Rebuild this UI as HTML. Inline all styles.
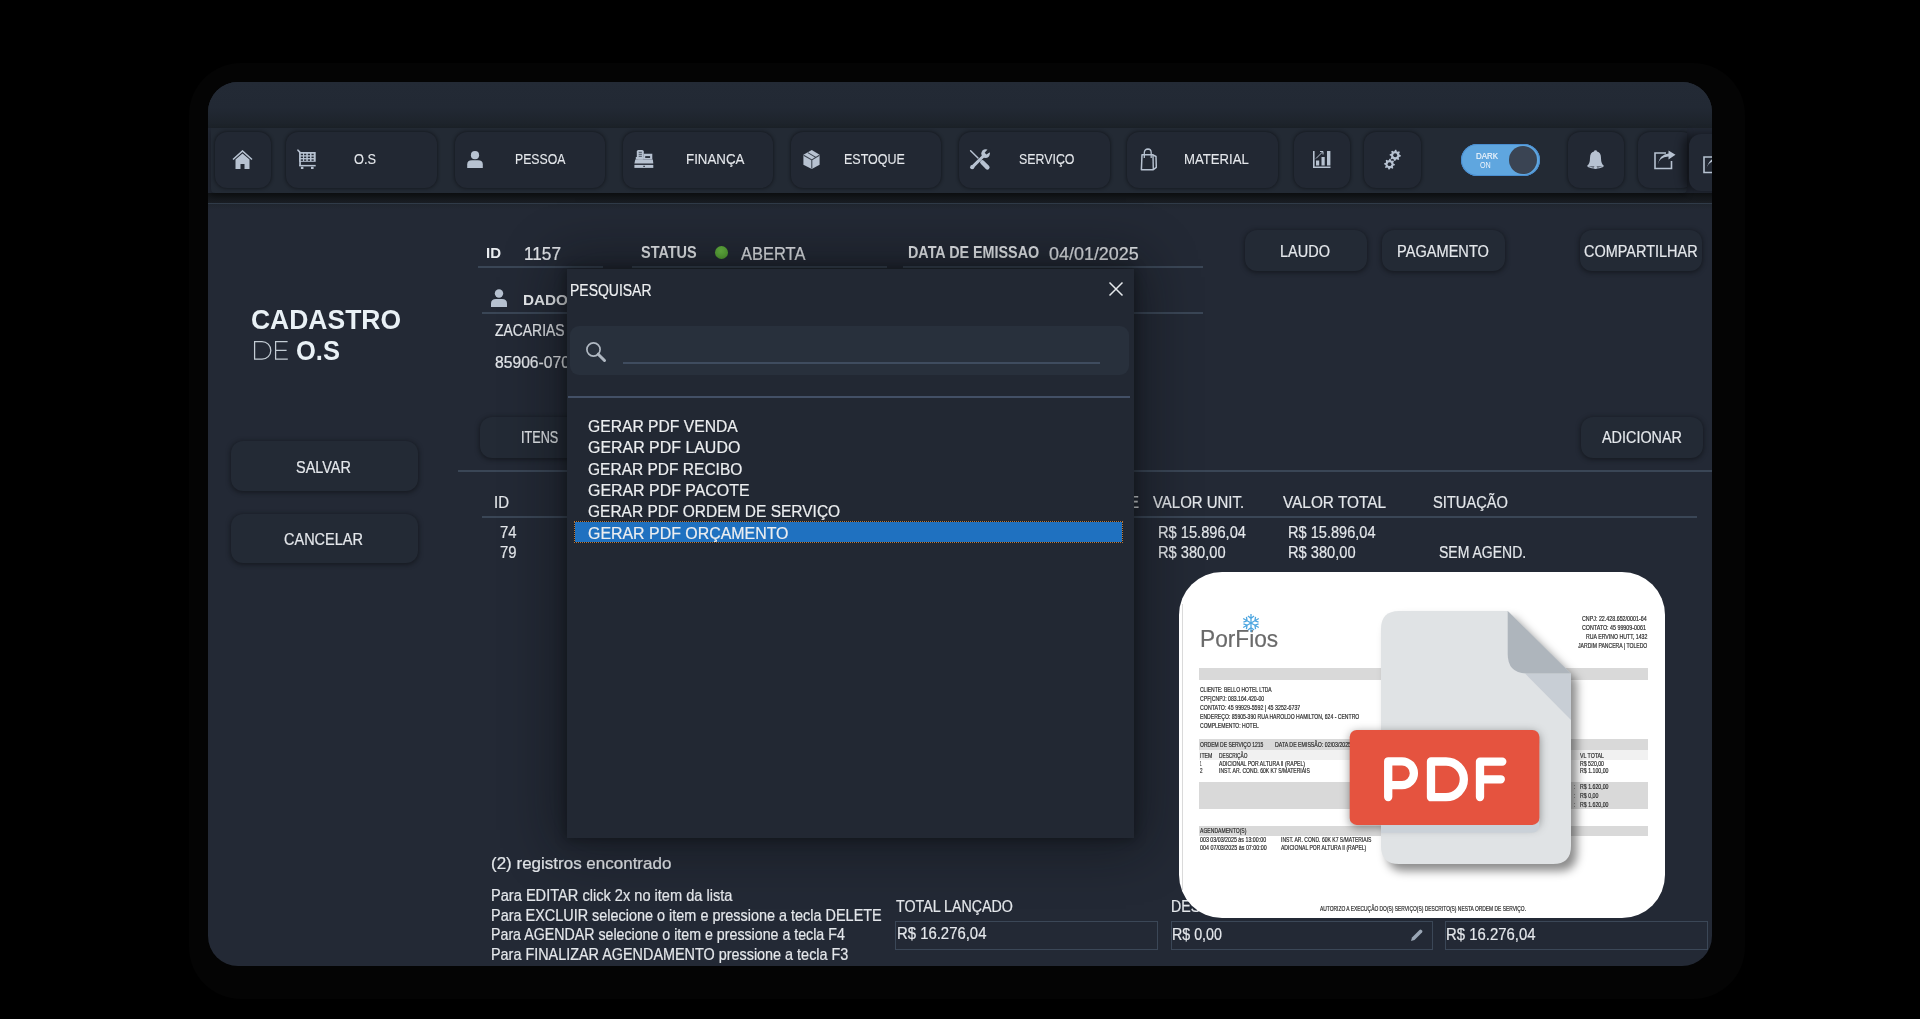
<!DOCTYPE html><html><head><meta charset="utf-8"><style>html,body{margin:0;padding:0;width:1920px;height:1019px;overflow:hidden;background:#000;font-family:"Liberation Sans",sans-serif;}.a{position:absolute;}.t{position:absolute;white-space:nowrap;line-height:1;transform-origin:0 0;}svg.a{display:block;}</style></head><body><div class="a" style="left:189px;top:63px;width:1556px;height:936px;background:#040404;border-radius:52px;"></div>
<div class="a" id="win" style="left:208px;top:82px;width:1504px;height:884px;border-radius:30px;overflow:hidden;background:#232935;">
<div class="a" style="left:-208px;top:-82px;width:1920px;height:1019px;">
<div class="a" style="left:208px;top:82px;width:1504px;height:46px;background:linear-gradient(#232a35 0%,#222934 55%,#1c2229 100%);"></div>
<div class="a" style="left:208px;top:193px;width:1504px;height:10px;background:linear-gradient(#111417,#1a1e24);"></div>
<div class="a" style="left:208px;top:203px;width:1504px;height:1px;background:#303b48;"></div>
<div class="a" style="left:208px;top:204px;width:1504px;height:6px;background:linear-gradient(#20262f,#232935);"></div>
<div class="a" style="left:211px;top:128px;width:1476px;height:65px;background:#232a34;border-radius:0 0 4px 4px;box-shadow:0 3px 6px rgba(0,0,0,.35);"></div>
<div class="a" style="left:215px;top:132px;width:56px;height:56px;background:#222833;border-radius:12px;box-shadow:0 0 3px 1px rgba(12,14,18,.5);"></div>
<div class="a" style="left:286px;top:132px;width:151px;height:56px;background:#222833;border-radius:12px;box-shadow:0 0 3px 1px rgba(12,14,18,.5);"></div>
<div class="a" style="left:455px;top:132px;width:150px;height:56px;background:#222833;border-radius:12px;box-shadow:0 0 3px 1px rgba(12,14,18,.5);"></div>
<div class="a" style="left:623px;top:132px;width:150px;height:56px;background:#222833;border-radius:12px;box-shadow:0 0 3px 1px rgba(12,14,18,.5);"></div>
<div class="a" style="left:791px;top:132px;width:150px;height:56px;background:#222833;border-radius:12px;box-shadow:0 0 3px 1px rgba(12,14,18,.5);"></div>
<div class="a" style="left:959px;top:132px;width:151px;height:56px;background:#222833;border-radius:12px;box-shadow:0 0 3px 1px rgba(12,14,18,.5);"></div>
<div class="a" style="left:1127px;top:132px;width:151px;height:56px;background:#222833;border-radius:12px;box-shadow:0 0 3px 1px rgba(12,14,18,.5);"></div>
<div class="a" style="left:1294px;top:132px;width:56px;height:56px;background:#222833;border-radius:12px;box-shadow:0 0 3px 1px rgba(12,14,18,.5);"></div>
<div class="a" style="left:1364px;top:132px;width:57px;height:56px;background:#222833;border-radius:12px;box-shadow:0 0 3px 1px rgba(12,14,18,.5);"></div>
<div class="a" style="left:1568px;top:132px;width:56px;height:56px;background:#222833;border-radius:12px;box-shadow:0 0 3px 1px rgba(12,14,18,.5);"></div>
<div class="a" style="left:1630px;top:128px;width:57px;height:65px;overflow:hidden;"><div class="a" style="left:8px;top:4px;width:56px;height:56px;background:#222833;border-radius:12px;box-shadow:0 0 3px 1px rgba(12,14,18,.5);"></div></div>
<div class="a" style="left:1689px;top:134px;width:71px;height:57px;background:#222833;border-radius:12px;box-shadow:-6px 0 8px rgba(0,0,0,.45);"></div>
<svg class="a" style="left:232px;top:150px" width="21" height="20" viewBox="0 0 21 20"><path d="M1 9.5 L10.5 1 L20 9.5" fill="none" stroke="#b7c2d1" stroke-width="1.6"/><path d="M3.5 9.5 L10.5 3.5 L17.5 9.5 V19 H12.5 V14 H8.5 V19 H3.5 Z" fill="#b7c2d1"/></svg>
<svg class="a" style="left:297px;top:149px" width="20" height="21" viewBox="0 0 20 21"><path d="M1 1.2 L3 3.4" stroke="#b7c2d1" stroke-width="1.6" stroke-linecap="round"/><rect x="2.2" y="3" width="16.5" height="9.8" fill="#b7c2d1"/><rect x="2.2" y="3" width="1.7" height="13.8" fill="#b7c2d1"/><rect x="3.8000000000000003" y="4.75" width="2.2" height="1.5" fill="#262d38"/><rect x="3.8000000000000003" y="7.550000000000001" width="2.2" height="1.5" fill="#262d38"/><rect x="3.8000000000000003" y="10.35" width="2.2" height="1.5" fill="#262d38"/><rect x="7.1" y="4.75" width="2.2" height="1.5" fill="#262d38"/><rect x="7.1" y="7.550000000000001" width="2.2" height="1.5" fill="#262d38"/><rect x="7.1" y="10.35" width="2.2" height="1.5" fill="#262d38"/><rect x="10.8" y="4.75" width="2.2" height="1.5" fill="#262d38"/><rect x="10.8" y="7.550000000000001" width="2.2" height="1.5" fill="#262d38"/><rect x="10.8" y="10.35" width="2.2" height="1.5" fill="#262d38"/><rect x="14.5" y="4.75" width="2.2" height="1.5" fill="#262d38"/><rect x="14.5" y="7.550000000000001" width="2.2" height="1.5" fill="#262d38"/><rect x="14.5" y="10.35" width="2.2" height="1.5" fill="#262d38"/><rect x="2.2" y="15.9" width="16.5" height="1.5" fill="#b7c2d1"/><rect x="3.9" y="17.8" width="2.5" height="2.2" fill="#b7c2d1"/><rect x="14" y="17.8" width="2.6" height="2.2" fill="#b7c2d1"/></svg>
<svg class="a" style="left:466px;top:150px" width="18" height="19" viewBox="0 0 18 19"><circle cx="9" cy="5.2" r="4.1" fill="#b7c2d1"/><path d="M1.2 18 V14.5 Q1.2 10.3 6 10.3 H12 Q16.8 10.3 16.8 14.5 V18 Z" fill="#b7c2d1"/></svg>
<svg class="a" style="left:633px;top:149px" width="22" height="20" viewBox="0 0 22 20"><rect x="3.8" y="1" width="7" height="9.4" rx="1.6" fill="#b7c2d1"/><path d="M5.7 3.3 H8.9 M5.7 5.3 H8.9 M5.7 7.3 H8.9" stroke="#3a4350" stroke-width="0.9"/><path d="M10.8 4.7 H19.3 V10.6 H2.8 V10.4 H10.8 Z" fill="#b7c2d1"/><rect x="2.8" y="8" width="8" height="2.6" fill="#b7c2d1"/><rect x="12.2" y="7.1" width="4.9" height="1.9" fill="#2a313c"/><path d="M2.3 10.6 H19.8 L20.3 14.6 H1.4 Z" fill="#b7c2d1"/><rect x="1.4" y="15.9" width="18.9" height="3" fill="#b7c2d1"/><rect x="10.3" y="16.8" width="1.6" height="1.1" fill="#2a313c"/></svg>
<svg class="a" style="left:802px;top:149px" width="19" height="21" viewBox="0 0 19 21"><path d="M9.8 1 L17.6 5.8 V15.7 L9.8 19.9 L1.4 15.7 V5.8 Z" fill="#b7c2d1"/><path d="M1.6 6.3 L9.8 11 L17.4 6.3 M9.8 11 V19.5 M5.8 3.6 L13.8 8.4" fill="none" stroke="#39414d" stroke-width="1.05"/></svg>
<svg class="a" style="left:968px;top:148px" width="23" height="23" viewBox="0 0 23 23"><path d="M2.6 2.8 L10 10" stroke="#b7c2d1" stroke-width="1.5" stroke-linecap="round"/><path d="M14.3 14.3 L19.4 19.4" stroke="#b7c2d1" stroke-width="4.4" stroke-linecap="round"/><path d="M4.5 18.8 L15.5 8" stroke="#b7c2d1" stroke-width="3.1" stroke-linecap="round"/><circle cx="17.6" cy="5.6" r="4.3" fill="#b7c2d1"/><circle cx="4.2" cy="19.2" r="2.1" fill="#b7c2d1"/><path d="M18.4 6.4 L16.7 4.7 L20.6 0.3 L23.5 3.2 Z" fill="#222833"/></svg>
<svg class="a" style="left:1139px;top:148px" width="20" height="23" viewBox="0 0 20 23"><path d="M3 6.8 H14 L17 8.5 L17.3 19.4 L14.3 21.7 H2.4 Z" fill="none" stroke="#b7c2d1" stroke-width="1.5" stroke-linejoin="round"/><path d="M14 6.8 L14.3 21.7" stroke="#b7c2d1" stroke-width="1.4"/><path d="M5.3 10 V4.5 Q5.5 1.2 9 1 Q12 1 12.2 4.5 V10" fill="none" stroke="#b7c2d1" stroke-width="1.3"/></svg>
<svg class="a" style="left:1312px;top:150px" width="20" height="20" viewBox="0 0 20 20"><path d="M1.8 1 V17.3 H18.5" fill="none" stroke="#b7c2d1" stroke-width="1.6"/><rect x="4" y="10.5" width="3.2" height="5" fill="#b7c2d1"/><rect x="9.5" y="7" width="3.2" height="8.5" fill="#b7c2d1"/><rect x="15" y="1" width="3.4" height="14.5" fill="#b7c2d1"/><path d="M4 8.5 L10.5 2" stroke="#b7c2d1" stroke-width="1"/><path d="M8 1.5 H11 V4.5" fill="none" stroke="#b7c2d1" stroke-width="1"/></svg>
<svg class="a" style="left:1383px;top:148px" width="20" height="23" viewBox="0 0 20 23"><polygon points="17.80,7.30 17.69,8.39 16.08,8.91 15.69,9.63 16.16,11.26 15.31,11.96 13.81,11.18 13.02,11.42 12.20,12.90 11.11,12.79 10.59,11.18 9.87,10.79 8.24,11.26 7.54,10.41 8.32,8.91 8.08,8.12 6.60,7.30 6.71,6.21 8.32,5.69 8.71,4.97 8.24,3.34 9.09,2.64 10.59,3.42 11.38,3.18 12.20,1.70 13.29,1.81 13.81,3.42 14.53,3.81 16.16,3.34 16.86,4.19 16.08,5.69 16.32,6.48" fill="#b7c2d1"/><circle cx="12.2" cy="7.3" r="1.96" fill="#222833"/><polygon points="11.90,16.20 11.80,17.25 10.24,17.75 9.87,18.45 10.32,20.02 9.50,20.69 8.05,19.94 7.29,20.17 6.50,21.60 5.45,21.50 4.95,19.94 4.25,19.57 2.68,20.02 2.01,19.20 2.76,17.75 2.53,16.99 1.10,16.20 1.20,15.15 2.76,14.65 3.13,13.95 2.68,12.38 3.50,11.71 4.95,12.46 5.71,12.23 6.50,10.80 7.55,10.90 8.05,12.46 8.75,12.83 10.32,12.38 10.99,13.20 10.24,14.65 10.47,15.41" fill="#b7c2d1"/><circle cx="6.5" cy="16.2" r="1.89" fill="#222833"/></svg>
<div class="a" style="left:1461px;top:144px;width:79px;height:32px;background:#5fa6df;border-radius:16px;box-shadow:inset 0 0 0 1px #4a8ed0;"></div>
<div class="a" style="left:1509px;top:146px;width:28px;height:28px;border-radius:50%;background:#3a4453;"></div>
<div class="t" style="left:1475.50px;top:152.00px;font-size:9.01px;color:#eef4fb;transform:scaleX(0.8782);-webkit-text-stroke:0.2px #eef4fb;">DARK</div>
<div class="t" style="left:1479.70px;top:161.00px;font-size:8.58px;color:#eef4fb;transform:scaleX(0.8396);">ON</div>
<svg class="a" style="left:1586px;top:149px" width="19" height="21" viewBox="0 0 19 21"><path d="M9.5 1.2 Q11 1.2 11 2.6 Q15 3.6 15 9 Q15 14.5 17.8 16.8 L17.8 17.5 H1.2 L1.2 16.8 Q4 14.5 4 9 Q4 3.6 8 2.6 Q8 1.2 9.5 1.2 Z" fill="#b7c2d1"/><path d="M2 17.5 Q9.5 21 17 17.5" fill="none" stroke="#b7c2d1" stroke-width="1.2"/><circle cx="9.5" cy="18.3" r="1.6" fill="#b7c2d1"/></svg>
<svg class="a" style="left:1654px;top:150px" width="23" height="20" viewBox="0 0 23 20"><path d="M12 3 H1 V18.5 H17.5 V11" fill="none" stroke="#b7c2d1" stroke-width="1.6"/><path d="M3.5 15 Q5 7 14.5 6.5 V9.5 L21.5 4.8 L14.5 0.5 V3.5 Q6 4 3.5 15 Z" fill="#b7c2d1"/></svg>
<div class="a" style="left:1689px;top:134px;width:23px;height:57px;overflow:hidden;"><svg class="a" style="left:14px;top:20px" width="23" height="20" viewBox="0 0 23 20"><path d="M12 3 H1 V18.5 H17.5 V11" fill="none" stroke="#b7c2d1" stroke-width="1.6"/><path d="M3.5 15 Q5 7 14.5 6.5 V9.5 L21.5 4.8 L14.5 0.5 V3.5 Q6 4 3.5 15 Z" fill="#b7c2d1"/></svg></div>
<div class="t" style="left:354.00px;top:151.00px;font-size:15.12px;color:#e4e7eb;transform:scaleX(0.8437);-webkit-text-stroke:0.1px #e4e7eb;">O.S</div>
<div class="t" style="left:515.00px;top:152.00px;font-size:14.39px;color:#e4e7eb;transform:scaleX(0.8529);-webkit-text-stroke:0.1px #e4e7eb;">PESSOA</div>
<div class="t" style="left:686.00px;top:152.00px;font-size:14.39px;color:#e4e7eb;transform:scaleX(0.9261);-webkit-text-stroke:0.1px #e4e7eb;">FINANÇA</div>
<div class="t" style="left:844.00px;top:152.00px;font-size:14.39px;color:#e4e7eb;transform:scaleX(0.8705);-webkit-text-stroke:0.1px #e4e7eb;">ESTOQUE</div>
<div class="t" style="left:1018.50px;top:152.00px;font-size:14.39px;color:#e4e7eb;transform:scaleX(0.8600);-webkit-text-stroke:0.1px #e4e7eb;">SERVIÇO</div>
<div class="t" style="left:1184.00px;top:152.00px;font-size:14.39px;color:#e4e7eb;transform:scaleX(0.9144);-webkit-text-stroke:0.1px #e4e7eb;">MATERIAL</div>
<div class="t" style="left:251.00px;top:306.00px;font-size:27.91px;font-weight:bold;color:#e9f1f6;transform:scaleX(0.9488);">CADASTRO</div>
<svg class="a" style="left:250px;top:338px" width="42" height="26" viewBox="0 0 42 26"><path d="M4.6 3.6 V21.2 H12 A8.8 8.8 0 0 0 12 3.6 Z M37.6 3.6 H25.6 V21.2 H37.8 M25.6 12.4 H36.6" fill="none" stroke="#c3ccd4" stroke-width="1.25"/></svg>
<div class="t" style="left:296.00px;top:337.00px;font-size:27.91px;font-weight:bold;color:#e9f1f6;transform:scaleX(0.9140);">O.S</div>
<div class="a" style="left:231px;top:441px;width:187px;height:50px;background:#232a35;border-radius:12px;box-shadow:0 1px 4px 1px rgba(12,15,19,.55);"></div>
<div class="a" style="left:231px;top:514px;width:187px;height:49px;background:#232a35;border-radius:12px;box-shadow:0 1px 4px 1px rgba(12,15,19,.55);"></div>
<div class="t" style="left:296.00px;top:460.00px;font-size:16.72px;color:#e4e7eb;transform:scaleX(0.8659);-webkit-text-stroke:0.2px #e4e7eb;">SALVAR</div>
<div class="t" style="left:284.00px;top:531.00px;font-size:16.42px;color:#e4e7eb;transform:scaleX(0.8834);-webkit-text-stroke:0.2px #e4e7eb;">CANCELAR</div>
<div class="t" style="left:486.00px;top:246.00px;font-size:14.68px;font-weight:bold;color:#eaedf0;transform:scaleX(1.0218);">ID</div>
<div class="t" style="left:524.00px;top:246.00px;font-size:17.44px;color:#e4e7eb;transform:scaleX(0.9867);-webkit-text-stroke:0.2px #e4e7eb;">1157</div>
<div class="a" style="left:478px;top:266px;width:125px;height:2px;background:#3a4656;"></div>
<div class="t" style="left:640.50px;top:245.00px;font-size:15.99px;font-weight:bold;color:#eaedf0;transform:scaleX(0.9049);">STATUS</div>
<div class="a" style="left:715px;top:246px;width:13px;height:13px;border-radius:50%;background:radial-gradient(circle at 45% 40%,#6cbf45,#4e9a2e);"></div>
<div class="t" style="left:741.00px;top:246.00px;font-size:17.44px;color:#e4e7eb;transform:scaleX(0.9443);-webkit-text-stroke:0.2px #e4e7eb;">ABERTA</div>
<div class="a" style="left:632px;top:266px;width:255px;height:2px;background:#3a4656;"></div>
<div class="t" style="left:907.70px;top:244.00px;font-size:16.28px;font-weight:bold;color:#eaedf0;transform:scaleX(0.8815);">DATA DE EMISSAO</div>
<div class="t" style="left:1048.80px;top:245.00px;font-size:18.90px;color:#e4e7eb;transform:scaleX(0.9495);-webkit-text-stroke:0.2px #e4e7eb;">04/01/2025</div>
<div class="a" style="left:903px;top:266px;width:300px;height:2px;background:#3a4656;"></div>
<svg class="a" style="left:490px;top:288px" width="18" height="20" viewBox="0 0 18 20"><circle cx="9" cy="5.5" r="4.2" fill="#b7c2d1"/><path d="M1 19 V15.5 Q1 11 6 11 H12 Q17 11 17 15.5 V19 Z" fill="#b7c2d1"/></svg>
<div class="t" style="left:523.00px;top:293.00px;font-size:14.83px;font-weight:bold;color:#eaedf0;transform:scaleX(1.0307);">DADO</div>
<div class="a" style="left:482px;top:312px;width:721px;height:2px;background:#3a4656;"></div>
<div class="t" style="left:495.00px;top:323.00px;font-size:15.99px;color:#e4e7eb;transform:scaleX(0.8706);-webkit-text-stroke:0.2px #e4e7eb;">ZACARIAS</div>
<div class="t" style="left:495.00px;top:354.00px;font-size:16.42px;color:#e4e7eb;transform:scaleX(0.9553);-webkit-text-stroke:0.2px #e4e7eb;">85906-070</div>
<div class="a" style="left:1245px;top:230px;width:122px;height:41px;background:#232a35;border-radius:12px;box-shadow:0 1px 4px 1px rgba(12,15,19,.55);"></div>
<div class="a" style="left:1382px;top:230px;width:123px;height:41px;background:#232a35;border-radius:12px;box-shadow:0 1px 4px 1px rgba(12,15,19,.55);"></div>
<div class="a" style="left:1580px;top:230px;width:122px;height:41px;background:#232a35;border-radius:12px;box-shadow:0 1px 4px 1px rgba(12,15,19,.55);"></div>
<div class="t" style="left:1280.00px;top:244.00px;font-size:16.57px;color:#e4e7eb;transform:scaleX(0.8759);-webkit-text-stroke:0.2px #e4e7eb;">LAUDO</div>
<div class="t" style="left:1397.00px;top:244.00px;font-size:16.57px;color:#e4e7eb;transform:scaleX(0.8813);-webkit-text-stroke:0.2px #e4e7eb;">PAGAMENTO</div>
<div class="t" style="left:1584.00px;top:244.00px;font-size:16.57px;color:#e4e7eb;transform:scaleX(0.8736);-webkit-text-stroke:0.2px #e4e7eb;">COMPARTILHAR</div>
<div class="a" style="left:480px;top:417px;width:160px;height:41px;background:#232a35;border-radius:12px;box-shadow:0 1px 4px 1px rgba(12,15,19,.55);"></div>
<div class="a" style="left:1581px;top:417px;width:122px;height:41px;background:#232a35;border-radius:12px;box-shadow:0 1px 4px 1px rgba(12,15,19,.55);"></div>
<div class="t" style="left:520.70px;top:430.00px;font-size:15.99px;color:#e4e7eb;transform:scaleX(0.7922);-webkit-text-stroke:0.2px #e4e7eb;">ITENS</div>
<div class="t" style="left:1601.50px;top:429.00px;font-size:17.01px;color:#e4e7eb;transform:scaleX(0.8469);-webkit-text-stroke:0.2px #e4e7eb;">ADICIONAR</div>
<div class="a" style="left:458px;top:470px;width:1254px;height:2px;background:#3a4656;"></div>
<div class="t" style="left:494.00px;top:494.00px;font-size:17.01px;color:#e4e7eb;transform:scaleX(0.8821);-webkit-text-stroke:0.2px #e4e7eb;">ID</div>
<div class="t" style="left:1152.80px;top:494.00px;font-size:17.01px;color:#e4e7eb;transform:scaleX(0.8799);-webkit-text-stroke:0.2px #e4e7eb;">VALOR UNIT.</div>
<div class="t" style="left:1282.50px;top:494.00px;font-size:17.01px;color:#e4e7eb;transform:scaleX(0.9033);-webkit-text-stroke:0.2px #e4e7eb;">VALOR TOTAL</div>
<div class="t" style="left:1433.00px;top:494.00px;font-size:17.01px;color:#e4e7eb;transform:scaleX(0.8631);-webkit-text-stroke:0.2px #e4e7eb;">SITUAÇÃO</div>
<div class="a" style="left:482px;top:516px;width:1215px;height:2px;background:#3a4656;"></div>
<div class="t" style="left:500.00px;top:525.00px;font-size:16.86px;color:#e4e7eb;transform:scaleX(0.8816);-webkit-text-stroke:0.2px #e4e7eb;">74</div>
<div class="t" style="left:500.00px;top:545.00px;font-size:16.72px;color:#e4e7eb;transform:scaleX(0.8893);-webkit-text-stroke:0.2px #e4e7eb;">79</div>
<div class="t" style="left:1158.00px;top:524.00px;font-size:17.15px;color:#e4e7eb;transform:scaleX(0.8544);-webkit-text-stroke:0.2px #e4e7eb;">R$ 15.896,04</div>
<div class="t" style="left:1288.00px;top:524.00px;font-size:17.15px;color:#e4e7eb;transform:scaleX(0.8505);-webkit-text-stroke:0.2px #e4e7eb;">R$ 15.896,04</div>
<div class="t" style="left:1158.00px;top:545.00px;font-size:16.86px;color:#e4e7eb;transform:scaleX(0.8688);-webkit-text-stroke:0.2px #e4e7eb;">R$ 380,00</div>
<div class="t" style="left:1288.00px;top:545.00px;font-size:16.86px;color:#e4e7eb;transform:scaleX(0.8688);-webkit-text-stroke:0.2px #e4e7eb;">R$ 380,00</div>
<div class="t" style="left:1438.80px;top:545.00px;font-size:16.86px;color:#e4e7eb;transform:scaleX(0.8308);-webkit-text-stroke:0.2px #e4e7eb;">SEM AGEND.</div>
<div class="t" style="left:491.00px;top:856.00px;font-size:15.99px;color:#e4e7eb;transform:scaleX(1.0629);-webkit-text-stroke:0.2px #e4e7eb;">(2) registros encontrado</div>
<div class="t" style="left:491.00px;top:888.00px;font-size:15.84px;color:#e4e7eb;transform:scaleX(0.9221);-webkit-text-stroke:0.2px #e4e7eb;">Para EDITAR click 2x no item da lista</div>
<div class="t" style="left:491.00px;top:908.00px;font-size:15.70px;color:#e4e7eb;transform:scaleX(0.9201);-webkit-text-stroke:0.2px #e4e7eb;">Para EXCLUIR selecione o item e pressione a tecla DELETE</div>
<div class="t" style="left:491.00px;top:927.00px;font-size:15.70px;color:#e4e7eb;transform:scaleX(0.9057);-webkit-text-stroke:0.2px #e4e7eb;">Para AGENDAR selecione o item e pressione a tecla F4</div>
<div class="t" style="left:491.00px;top:947.00px;font-size:15.70px;color:#e4e7eb;transform:scaleX(0.9176);-webkit-text-stroke:0.2px #e4e7eb;">Para FINALIZAR AGENDAMENTO pressione a tecla F3</div>
<div class="t" style="left:896.00px;top:899.00px;font-size:15.70px;color:#e4e7eb;transform:scaleX(0.9084);-webkit-text-stroke:0.2px #e4e7eb;">TOTAL LANÇADO</div>
<div class="t" style="left:1171.00px;top:899.00px;font-size:15.70px;color:#e4e7eb;transform:scaleX(0.9020);-webkit-text-stroke:0.2px #e4e7eb;">DESCONTO</div>
<div class="a" style="left:895px;top:921px;width:263px;height:29px;border:1px solid #3b4757;box-sizing:border-box;"></div>
<div class="a" style="left:1171px;top:921px;width:262px;height:29px;border:1px solid #3b4757;box-sizing:border-box;"></div>
<div class="a" style="left:1445px;top:921px;width:263px;height:29px;border:1px solid #3b4757;box-sizing:border-box;"></div>
<div class="t" style="left:896.50px;top:925.00px;font-size:16.28px;color:#e4e7eb;transform:scaleX(0.9155);-webkit-text-stroke:0.2px #e4e7eb;">R$ 16.276,04</div>
<div class="t" style="left:1172.30px;top:926.00px;font-size:17.15px;color:#e4e7eb;transform:scaleX(0.8317);-webkit-text-stroke:0.2px #e4e7eb;">R$ 0,00</div>
<div class="t" style="left:1446.00px;top:926.00px;font-size:17.15px;color:#e4e7eb;transform:scaleX(0.8690);-webkit-text-stroke:0.2px #e4e7eb;">R$ 16.276,04</div>
<svg class="a" style="left:1409px;top:928px" width="15" height="15" viewBox="0 0 15 15"><path d="M2 13 L3 9.5 L10.5 2 Q11.5 1 12.5 2 L13 2.5 Q14 3.5 13 4.5 L5.5 12 Z" fill="#9aa6b5"/></svg>
<div class="t" style="left:1041.40px;top:494.00px;font-size:17.01px;color:#e6e9ed;transform:scaleX(0.8800);-webkit-text-stroke:0.2px #e6e9ed;">QUANTIDADE</div>
<div class="a" style="left:567px;top:269px;width:567px;height:569px;background:#222833;box-shadow:0 0 10px 2px rgba(0,0,0,.3),0 0 50px 10px rgba(8,10,13,.45);"></div>
<div class="t" style="left:569.50px;top:283.00px;font-size:16.86px;color:#eef0f2;transform:scaleX(0.8284);-webkit-text-stroke:0.2px #eef0f2;">PESQUISAR</div>
<svg class="a" style="left:1108px;top:281px" width="16" height="16" viewBox="0 0 16 16"><path d="M1.5 1.5 L14.5 14.5 M14.5 1.5 L1.5 14.5" stroke="#e6e9ec" stroke-width="1.5"/></svg>
<div class="a" style="left:570px;top:326px;width:559px;height:49px;background:#28303c;border-radius:9px;"></div>
<svg class="a" style="left:585px;top:341px" width="23" height="23" viewBox="0 0 23 23"><circle cx="8.5" cy="8.5" r="6.6" fill="none" stroke="#b0b8c2" stroke-width="1.7"/><path d="M13.2 13.2 L19.5 19.5" stroke="#b0b8c2" stroke-width="3" stroke-linecap="round"/></svg>
<div class="a" style="left:623px;top:362px;width:477px;height:2px;background:#3f4c5f;"></div>
<div class="a" style="left:568px;top:396px;width:562px;height:2px;background:#435066;"></div>
<div class="a" style="left:574px;top:521px;width:549px;height:22px;background:#14171b;border:1px dotted #b9773a;box-sizing:border-box;"></div>
<div class="a" style="left:575px;top:522px;width:547px;height:20px;background:#1f71c0;"></div>
<div class="t" style="left:588.00px;top:419.00px;font-size:16.64px;color:#eceef0;transform:scaleX(0.9428);-webkit-text-stroke:0.2px #eceef0;">GERAR PDF VENDA</div>
<div class="t" style="left:588.00px;top:440.00px;font-size:16.64px;color:#eceef0;transform:scaleX(0.9584);-webkit-text-stroke:0.2px #eceef0;">GERAR PDF LAUDO</div>
<div class="t" style="left:588.00px;top:462.00px;font-size:16.64px;color:#eceef0;transform:scaleX(0.9335);-webkit-text-stroke:0.2px #eceef0;">GERAR PDF RECIBO</div>
<div class="t" style="left:588.00px;top:483.00px;font-size:16.64px;color:#eceef0;transform:scaleX(0.9573);-webkit-text-stroke:0.2px #eceef0;">GERAR PDF PACOTE</div>
<div class="t" style="left:588.00px;top:504.00px;font-size:16.64px;color:#eceef0;transform:scaleX(0.9327);-webkit-text-stroke:0.2px #eceef0;">GERAR PDF ORDEM DE SERVIÇO</div>
<div class="t" style="left:588.00px;top:526.00px;font-size:16.64px;color:#eceef0;transform:scaleX(0.9575);-webkit-text-stroke:0.2px #eceef0;">GERAR PDF ORÇAMENTO</div>
<div class="a" style="left:1178.5px;top:571.5px;width:486.5px;height:346.0px;background:#ffffff;border-radius:43px;"></div>
<div class="a" style="left:1182px;top:604px;width:1px;height:286px;background:#dadada;"></div>
<div class="t" style="left:1199.80px;top:627.00px;font-size:24.27px;color:#6a6a6a;transform:scaleX(0.9352);-webkit-text-stroke:0.2px #6a6a6a;">PorFios</div>
<svg class="a" style="left:1241px;top:613px" width="20" height="20" viewBox="0 0 20 20"><g transform="rotate(0 10 10)"><path d="M10 1 V19 M7 3 L10 5.5 L13 3 M7 17 L10 14.5 L13 17" fill="none" stroke="#4da6e0" stroke-width="1.3"/></g><g transform="rotate(60 10 10)"><path d="M10 1 V19 M7 3 L10 5.5 L13 3 M7 17 L10 14.5 L13 17" fill="none" stroke="#4da6e0" stroke-width="1.3"/></g><g transform="rotate(120 10 10)"><path d="M10 1 V19 M7 3 L10 5.5 L13 3 M7 17 L10 14.5 L13 17" fill="none" stroke="#4da6e0" stroke-width="1.3"/></g></svg>
<div class="a" style="left:1199px;top:668px;width:449px;height:12px;background:#d9d9d9;"></div>
<div class="a" style="left:1199px;top:739px;width:449px;height:11px;background:#d9d9d9;"></div>
<div class="a" style="left:1199px;top:750px;width:449px;height:10px;background:#f1f1f1;"></div>
<div class="a" style="left:1199px;top:782px;width:449px;height:27px;background:#d9d9d9;"></div>
<div class="a" style="left:1199px;top:826px;width:449px;height:10px;background:#d9d9d9;"></div>
<div class="t" style="left:1199.80px;top:687.00px;font-size:6.69px;color:#2c2c2c;transform:scaleX(0.7478);-webkit-text-stroke:0.2px #2c2c2c;">CLIENTE: BELLO HOTEL LTDA</div>
<div class="t" style="left:1199.80px;top:696.00px;font-size:6.69px;color:#2c2c2c;transform:scaleX(0.7722);-webkit-text-stroke:0.2px #2c2c2c;">CPF|CNPJ: 083.164.420-00</div>
<div class="t" style="left:1199.80px;top:705.00px;font-size:6.69px;color:#2c2c2c;transform:scaleX(0.7894);-webkit-text-stroke:0.2px #2c2c2c;">CONTATO: 45 99929-5592 | 45  3252-6737</div>
<div class="t" style="left:1199.80px;top:714.00px;font-size:6.69px;color:#2c2c2c;transform:scaleX(0.7623);-webkit-text-stroke:0.2px #2c2c2c;">ENDEREÇO: 85905-390  RUA HAROLDO HAMILTON, 624 - CENTRO</div>
<div class="t" style="left:1199.80px;top:723.00px;font-size:6.69px;color:#2c2c2c;transform:scaleX(0.7513);-webkit-text-stroke:0.2px #2c2c2c;">COMPLEMENTO: HOTEL</div>
<div class="t" style="left:1199.60px;top:742.00px;font-size:6.69px;color:#2c2c2c;transform:scaleX(0.7493);-webkit-text-stroke:0.2px #2c2c2c;">ORDEM DE SERVIÇO 1215</div>
<div class="t" style="left:1274.70px;top:742.00px;font-size:6.69px;color:#2c2c2c;transform:scaleX(0.7826);-webkit-text-stroke:0.2px #2c2c2c;">DATA DE EMISSÃO: 02/03/2025</div>
<div class="t" style="left:1199.60px;top:753.00px;font-size:6.69px;color:#2c2c2c;transform:scaleX(0.7760);-webkit-text-stroke:0.2px #2c2c2c;">ITEM</div>
<div class="t" style="left:1219.00px;top:753.00px;font-size:6.69px;color:#2c2c2c;transform:scaleX(0.7170);-webkit-text-stroke:0.2px #2c2c2c;">DESCRIÇÃO</div>
<div class="t" style="left:1199.80px;top:761.00px;font-size:6.69px;color:#2c2c2c;transform:scaleX(0.4042);-webkit-text-stroke:0.2px #2c2c2c;">1</div>
<div class="t" style="left:1219.00px;top:761.00px;font-size:6.69px;color:#2c2c2c;transform:scaleX(0.7613);-webkit-text-stroke:0.2px #2c2c2c;">ADICIONAL POR ALTURA II (RAPEL)</div>
<div class="t" style="left:1199.80px;top:768.00px;font-size:6.69px;color:#2c2c2c;transform:scaleX(0.6737);-webkit-text-stroke:0.2px #2c2c2c;">2</div>
<div class="t" style="left:1219.00px;top:768.00px;font-size:6.69px;color:#2c2c2c;transform:scaleX(0.7581);-webkit-text-stroke:0.2px #2c2c2c;">INST. AR. COND.  60K  K7 S/MATERIAIS</div>
<div class="t" style="left:1199.60px;top:828.00px;font-size:6.69px;color:#2c2c2c;transform:scaleX(0.7585);-webkit-text-stroke:0.2px #2c2c2c;">AGENDAMENTO(S)</div>
<div class="t" style="left:1199.60px;top:837.00px;font-size:6.69px;color:#2c2c2c;transform:scaleX(0.7934);-webkit-text-stroke:0.2px #2c2c2c;">003   03/03/2025 às  13:00:00</div>
<div class="t" style="left:1280.70px;top:837.00px;font-size:6.69px;color:#2c2c2c;transform:scaleX(0.7541);-webkit-text-stroke:0.2px #2c2c2c;">INST. AR. COND.  60K  K7 S/MATERIAIS</div>
<div class="t" style="left:1199.60px;top:845.00px;font-size:6.69px;color:#2c2c2c;transform:scaleX(0.8013);-webkit-text-stroke:0.2px #2c2c2c;">004   07/03/2025 às  07:00:00</div>
<div class="t" style="left:1280.70px;top:845.00px;font-size:6.69px;color:#2c2c2c;transform:scaleX(0.7551);-webkit-text-stroke:0.2px #2c2c2c;">ADICIONAL POR ALTURA II (RAPEL)</div>
<div class="t" style="left:1319.80px;top:906.00px;font-size:6.69px;color:#2c2c2c;transform:scaleX(0.7331);-webkit-text-stroke:0.2px #2c2c2c;">AUTORIZO A EXECUÇÃO DO(S) SERVIÇO(S) DESCRITO(S) NESTA ORDEM DE SERVIÇO.</div>
<div class="t" style="left:1582.40px;top:616.00px;font-size:6.69px;color:#2c2c2c;transform:scaleX(0.7972);-webkit-text-stroke:0.2px #2c2c2c;">CNPJ: 22.428.652/0001-64</div>
<div class="t" style="left:1581.70px;top:625.00px;font-size:6.69px;color:#2c2c2c;transform:scaleX(0.7950);-webkit-text-stroke:0.2px #2c2c2c;">CONTATO: 45  99909-0061</div>
<div class="t" style="left:1585.60px;top:634.00px;font-size:6.69px;color:#2c2c2c;transform:scaleX(0.7806);-webkit-text-stroke:0.2px #2c2c2c;">RUA ERVINO HUTT, 1432</div>
<div class="t" style="left:1577.70px;top:643.00px;font-size:6.69px;color:#2c2c2c;transform:scaleX(0.7624);-webkit-text-stroke:0.2px #2c2c2c;">JARDIM PANCERA | TOLEDO</div>
<div class="t" style="left:1579.70px;top:753.00px;font-size:6.69px;color:#2c2c2c;transform:scaleX(0.7846);-webkit-text-stroke:0.2px #2c2c2c;">VL TOTAL</div>
<div class="t" style="left:1579.70px;top:761.00px;font-size:6.69px;color:#2c2c2c;transform:scaleX(0.7778);-webkit-text-stroke:0.2px #2c2c2c;">R$ 520,00</div>
<div class="t" style="left:1579.70px;top:768.00px;font-size:6.69px;color:#2c2c2c;transform:scaleX(0.7821);-webkit-text-stroke:0.2px #2c2c2c;">R$ 1.100,00</div>
<div class="t" style="left:1579.70px;top:784.00px;font-size:6.69px;color:#2c2c2c;transform:scaleX(0.7821);-webkit-text-stroke:0.2px #2c2c2c;">R$ 1.620,00</div>
<div class="t" style="left:1579.70px;top:793.00px;font-size:6.69px;color:#2c2c2c;transform:scaleX(0.7894);-webkit-text-stroke:0.2px #2c2c2c;">R$ 0,00</div>
<div class="t" style="left:1579.70px;top:802.00px;font-size:6.69px;color:#2c2c2c;transform:scaleX(0.7821);-webkit-text-stroke:0.2px #2c2c2c;">R$ 1.620,00</div>
<div class="t" style="left:1574.00px;top:784.00px;font-size:6.69px;color:#2c2c2c;transform:scaleX(0.5342);-webkit-text-stroke:0.2px #2c2c2c;">:</div>
<div class="t" style="left:1574.00px;top:793.00px;font-size:6.69px;color:#2c2c2c;transform:scaleX(0.5342);-webkit-text-stroke:0.2px #2c2c2c;">:</div>
<div class="t" style="left:1574.00px;top:802.00px;font-size:6.69px;color:#2c2c2c;transform:scaleX(0.5342);-webkit-text-stroke:0.2px #2c2c2c;">:</div>
<svg class="a" style="left:1370px;top:600px;overflow:visible" width="240" height="290" viewBox="1370 600 240 290"><defs><filter id="ds" x="-20%" y="-20%" width="150%" height="150%"><feGaussianBlur stdDeviation="5"/></filter></defs><path d="M1399 611 H1507.7 L1571 673.4 V846 Q1571 864 1553 864 H1399 Q1381 864 1381 846 V629 Q1381 611 1399 611 Z" fill="rgba(0,0,0,.45)" transform="translate(6,7)" filter="url(#ds)"/><path d="M1399 611 H1507.7 L1571 673.4 V846 Q1571 864 1553 864 H1399 Q1381 864 1381 846 V629 Q1381 611 1399 611 Z" fill="#e0e3e5"/><path d="M1525 673.4 H1571 V720 Z" fill="#c8ced5"/><path d="M1507.7 611 L1571 673.4 H1527 Q1507.7 673.4 1507.7 654 Z" fill="#aeb5bc"/><rect x="1349.7" y="732" width="189.7" height="96" rx="7" fill="rgba(0,0,0,.4)" filter="url(#ds)"/><path d="M1381 738 H1531.4 Q1539.4 738 1539.4 746 V824.8 Q1539.4 832.8 1531.4 832.8 H1381 Z" fill="#cad1d8"/><rect x="1349.7" y="730" width="189.7" height="94.9" rx="7" fill="#e5533f"/></svg>
<svg class="a" style="left:1370px;top:740px" width="150" height="75" viewBox="1370 740 150 75"><path d="M1388.2 797 V761.3 H1402 A11.9 11.9 0 0 1 1402 785.1 H1388.2 M1431 797.2 V761.5 H1446 A17.85 17.85 0 0 1 1446 797.2 Z M1480 797 V761.6 H1502.3 M1480 779.3 H1500.8" fill="none" stroke="#fff" stroke-width="8.3" stroke-linecap="round" stroke-linejoin="round"/></svg>
</div></div></body></html>
